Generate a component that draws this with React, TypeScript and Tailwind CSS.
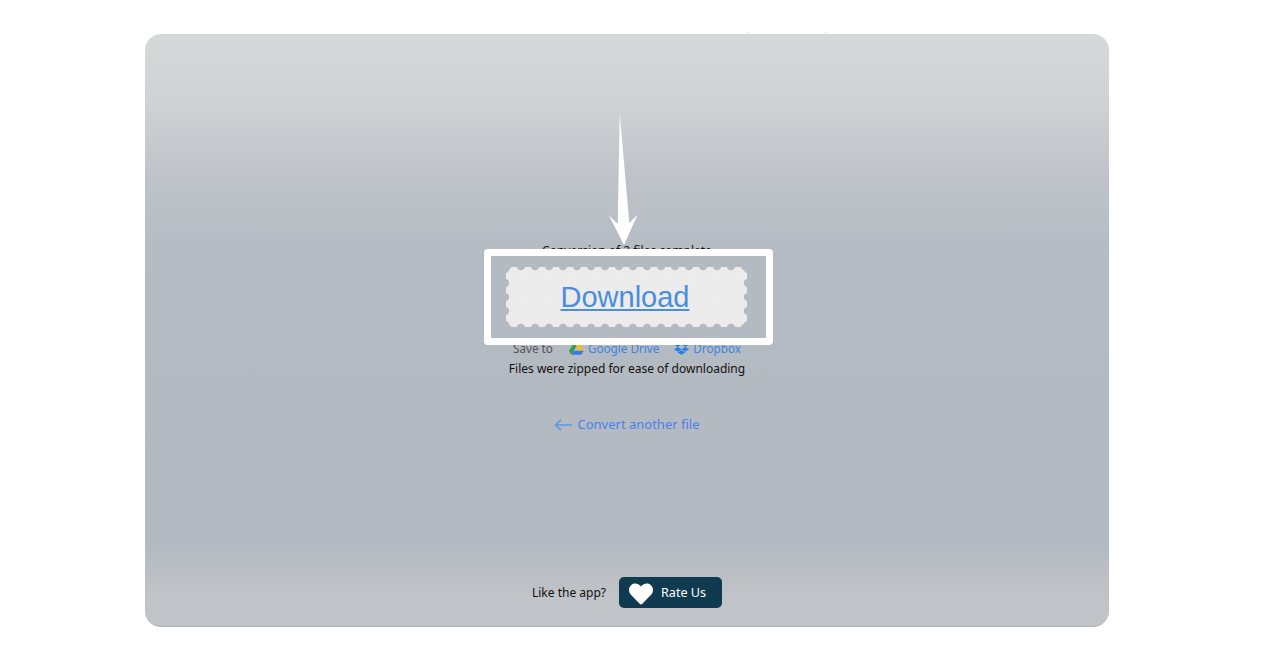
import { FaDropbox, FaHeart } from 'react-icons/fa';

const NOTCH_X = Array.from({ length: 18 }, (_, i) => 1 + i * 14);
const NOTCH_Y = Array.from({ length: 5 }, (_, i) => 2 + i * 14);

function StampEdge() {
  return (
    <svg className="absolute inset-0" width="241" height="60" viewBox="0 0 241 60" aria-hidden="true">
      {NOTCH_X.map(x => (
        <g key={x} fill="#b4bac2">
          <circle cx={x} cy="-1" r="4.2" />
          <circle cx={x} cy="61" r="4.2" />
        </g>
      ))}
      {NOTCH_Y.map(y => (
        <g key={y} fill="#b4bac2">
          <circle cx="-1" cy={y} r="4.2" />
          <circle cx="242" cy={y} r="4.2" />
        </g>
      ))}
    </svg>
  );
}

function DriveIcon() {
  return (
    <svg width="15" height="13" viewBox="0 0 15 13" aria-hidden="true">
      <path d="M5 0.5h4.6l5 8.2h-4.7z" fill="#f4c20d" />
      <path d="M5 0.5l-5 8.4 2.4 3.9 5-8.5z" fill="#2f9e4f" />
      <path d="M2.4 12.8h9.9l2.3-4.1H4.9z" fill="#3b78e7" />
    </svg>
  );
}

export default function App() {
  return (
    <div className="min-h-[670px] bg-white pl-[145px] pt-[34px] font-['Noto_Sans','DejaVu_Sans',sans-serif]">
      <div className="relative flex h-[593px] w-[964px] flex-col items-center rounded-[16px] border-b border-[#b0b3b6] bg-[linear-gradient(to_bottom,#d7d8da_0%,#cfd1d4_12%,#bfc3c9_24%,#b5bbc3_38%,#b3b9c1_85%,#c0c3c7_95%,#c2c5c8_100%)] pt-[208px] text-[12px] leading-[18px] text-[#111]">
        {/* ticks poking out over the top edge */}
        <div className="absolute -top-[2px] left-[603px] h-[2px] w-px bg-[#dddddd]" />
        <div className="absolute -top-[2px] left-[680px] h-[2px] w-px bg-[#dddddd]" />

        <p>Conversion of 2 files complete</p>

        <div className="mt-[79px] flex items-center text-[11.7px]">
          <span className="mr-4 text-[#555]">Save to</span>
          <span className="flex items-center gap-[4px]">
            <DriveIcon />
            <a href="#" className="text-[#3d84e0]">Google Drive</a>
          </span>
          <span className="ml-[15px] flex items-center gap-[4px]">
            <FaDropbox className="text-[15px] text-[#2480e6]" />
            <a href="#" className="text-[#3d84e0]">Dropbox</a>
          </span>
        </div>
        <p className="mt-[3px]">Files were zipped for ease of downloading</p>

        <a href="#" className="mt-[36px] flex items-center gap-[5px] text-[13px] leading-[20px] text-[#4a7ff0]">
          <svg className="mt-px" width="18" height="12" viewBox="0 0 18 12" fill="none" stroke="#5a9ae2" strokeWidth="1.6" aria-hidden="true">
            <path d="M18 6H1.5M7 0.8L1.5 6 7 11.2" />
          </svg>
          Convert another file
        </a>

        <div className="mt-auto mb-[18px] flex items-center gap-[13px]">
          <span>Like the app?</span>
          <button className="flex h-[31px] w-[103px] items-center rounded-[5px] bg-[#0f3a50] pl-[10px] text-white">
            <FaHeart className="mt-[3px] text-[24px]" />
            <span className="ml-[8px] text-[12.6px]">Rate Us</span>
          </button>
        </div>

        {/* highlight frame around the download button */}
        <div className="absolute left-[339px] top-[215px] flex h-[96px] w-[289px] items-center justify-center rounded-[4px] border-[7px] border-white bg-[#b4bac2] pr-[4px]">
          <div className="relative flex h-[60px] w-[241px] items-center justify-center bg-[#ececec] bg-[radial-gradient(#e8e8e8_1px,transparent_1px)] bg-[length:3px_3px]">
            <StampEdge />
            <a href="#" className="relative mr-[3px] font-['Liberation_Sans',sans-serif] text-[29px] leading-[36px] text-[#4a8ddc] underline">
              Download
            </a>
          </div>
        </div>

        {/* arrow pointing at the frame */}
        <svg className="absolute left-[460px] top-[76px]" width="32" height="138" viewBox="0 0 32 138" aria-hidden="true">
          <path d="M14.7 3L12.7 114 3.7 105 19 135 32.3 105 24.3 113z" fill="#fff" />
        </svg>
      </div>
    </div>
  );
}
